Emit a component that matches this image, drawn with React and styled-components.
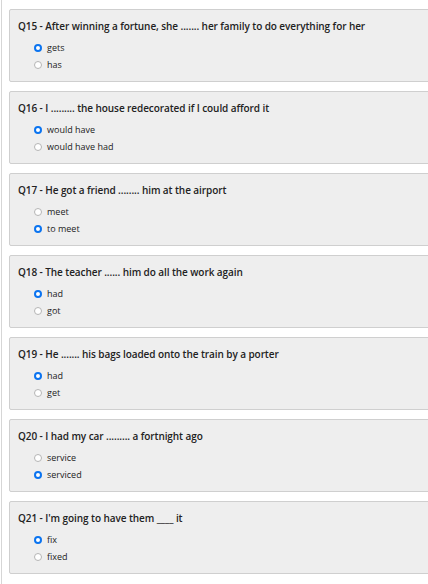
import React, { useState } from 'react';
import styled, { createGlobalStyle } from 'styled-components';

const GlobalStyle = createGlobalStyle`
  html, body {
    margin: 0;
    height: 100%;
    overflow: hidden;
    background: #fff;
    font-family: "Open Sans", "Noto Sans", sans-serif;
  }
`;

const questions = [
  { id: 15, text: 'After winning a fortune, she ....... her family to do everything for her', options: ['gets', 'has'], answer: 0 },
  { id: 16, text: 'I ......... the house redecorated if I could afford it', options: ['would have', 'would have had'], answer: 0 },
  { id: 17, text: 'He got a friend ........ him at the airport', options: ['meet', 'to meet'], answer: 1 },
  { id: 18, text: 'The teacher ...... him do all the work again', options: ['had', 'got'], answer: 0 },
  { id: 19, text: 'He ....... his bags loaded onto the train by a porter', options: ['had', 'get'], answer: 0 },
  { id: 20, text: 'I had my car ......... a fortnight ago', options: ['service', 'serviced'], answer: 1 },
  { id: 21, text: "I'm going to have them ____ it", options: ['fix', 'fixed'], answer: 0 },
];

function Question({ q }) {
  const [picked, setPicked] = useState(q.answer);
  return (
    <Card>
      <Title>
        Q{q.id} - {q.text}
      </Title>
      <Options>
        {q.options.map((opt, i) => (
          <Option key={opt} onClick={() => setPicked(i)}>
            <Radio $checked={picked === i} />
            {opt}
          </Option>
        ))}
      </Options>
    </Card>
  );
}

export default function App() {
  return (
    <>
      <GlobalStyle />
      <Page>
        {/* tail of the previous question, scrolled mostly out of view */}
        <Card $stub />
        {questions.map((q) => (
          <Question key={q.id} q={q} />
        ))}
      </Page>
    </>
  );
}

const Page = styled.div`
  width: 423px;
  margin-left: 1px;
  margin-top: -73px;
  border-left: 1px solid #d6d6d6;
  border-right: 1px solid #d6d6d6;
  padding: 0 6px 20px 7px;
  display: flex;
  flex-direction: column;
  gap: 9px;
`;

const Card = styled.div`
  background: #eeeeee;
  border: 1px solid #cfcfcf;
  border-radius: 2px;
  padding: 9px 8px 8px;
  height: ${(p) => (p.$stub ? '73px' : 'auto')};
  box-sizing: border-box;
`;

const Title = styled.div`
  font-size: 10px;
  line-height: 14px;
  font-weight: 600;
  color: #222;
  letter-spacing: -0.08px;
`;

const Options = styled.div`
  margin: 6px 0 0 16px;
  display: flex;
  flex-direction: column;
`;

const Option = styled.label`
  display: flex;
  align-items: center;
  gap: 5px;
  height: 17px;
  font-size: 9px;
  color: #222;
  cursor: pointer;
`;

const Radio = styled.span`
  width: 8px;
  height: 8px;
  box-sizing: border-box;
  border-radius: 50%;
  border: ${(p) => (p.$checked ? '2.5px solid #0b74f0' : '1px solid #b5b5b5')};
  background: #fff;
  flex-shrink: 0;
`;
